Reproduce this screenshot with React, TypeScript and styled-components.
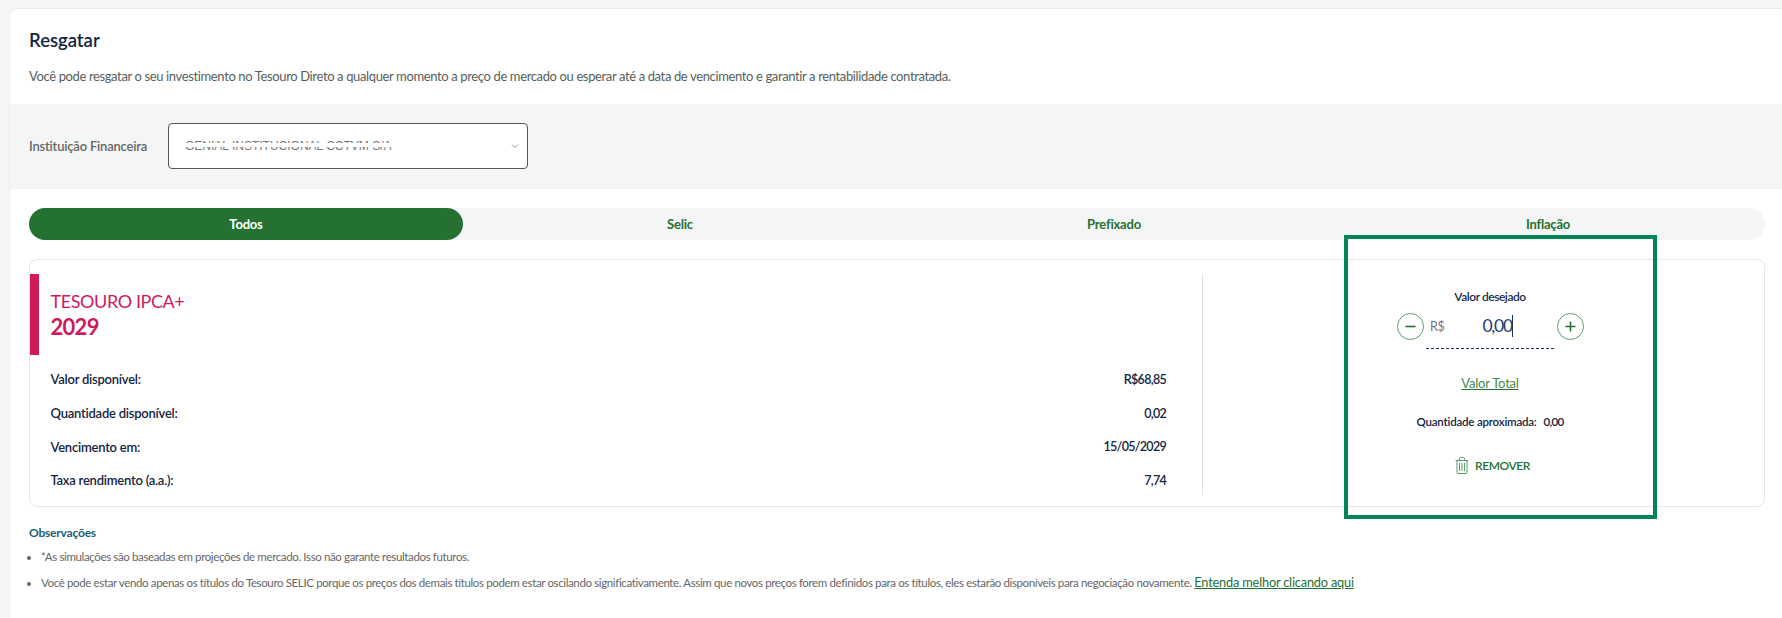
import React from "react";
import styled, { createGlobalStyle } from "styled-components";

const GlobalStyle = createGlobalStyle`
  html, body {
    margin: 0;
    padding: 0;
    background: #f4f6f5;
    font-family: "Lato", "Noto Sans", sans-serif;
    color: #1a2b49;
  }
  body {
    width: 1782px;
    height: 618px;
    overflow: hidden;
  }
`;

const Page = styled.div`
  padding: 8px 0 0 9px;
`;

const Card = styled.div`
  position: relative;
  height: 610px;
  background: #fff;
  border: 1px solid #e9ecea;
  border-right: 0;
  border-bottom: 0;
  border-radius: 8px 0 0 0;
  box-sizing: border-box;
`;

const Header = styled.div`
  padding: 20px 19px 0;
  height: 95px;
  box-sizing: border-box;
`;

const Title = styled.h1`
  margin: 0;
  font-size: 18.5px;
  line-height: 22px;
  font-weight: 600;
  color: #14253f;
`;

const Description = styled.p`
  margin: 16px 0 0;
  font-size: 13px;
  line-height: 18px;
  letter-spacing: -0.37px;
  color: #555f5b;
`;

const Band = styled.div`
  display: flex;
  align-items: center;
  box-sizing: border-box;
  height: 85px;
  padding: 0 19px 1px;
  background: #f4f6f5;
`;

const BandLabel = styled.span`
  flex: 0 0 139px;
  font-size: 13px;
  font-weight: 600;
  letter-spacing: -0.2px;
  color: #666;
`;

const SelectBox = styled.div`
  display: flex;
  align-items: center;
  justify-content: space-between;
  box-sizing: border-box;
  width: 360px;
  height: 46px;
  padding: 0 8px 0 16px;
  background: #fff;
  border: 1px solid #555;
  border-radius: 4px;
`;

/* the institution name is half wiped out in the picture */
const WipedName = styled.span`
  position: relative;
  font-family: "Liberation Sans", sans-serif;
  font-size: 12px;
  line-height: 14px;
  color: #777;

  &::after {
    content: "";
    position: absolute;
    left: 0;
    right: 0;
    top: 4px;
    height: 4px;
    background: #fff;
  }
`;

const Tabs = styled.div`
  display: grid;
  grid-template-columns: repeat(4, 1fr);
  width: 1736px;
  height: 32px;
  margin: 19px 0 0 19px;
  background: #f4f6f5;
  border-radius: 16px;
`;

const Tab = styled.div<{ $active?: boolean }>`
  display: flex;
  align-items: center;
  justify-content: center;
  border-radius: 16px;
  font-size: 13px;
  font-weight: 700;
  letter-spacing: -0.2px;
  background: ${(p) => (p.$active ? "#247132" : "transparent")};
  color: ${(p) => (p.$active ? "#fff" : "#247132")};
`;

const Product = styled.div`
  display: flex;
  width: 1736px;
  height: 248px;
  margin: 19px 0 0 19px;
  box-sizing: border-box;
  padding: 14px 0 11px;
  border: 1px solid #e4e6e5;
  border-radius: 8px;
`;

const Left = styled.div`
  flex: 0 0 1173px;
  box-sizing: border-box;
  border-right: 1px solid #dfe2e1;
`;

const Heading = styled.div`
  border-left: 9px solid #cf1a5c;
  padding: 14px 0 0 11.5px;
  height: 81px;
  box-sizing: border-box;
  color: #cf1a5c;
`;

const HeadingName = styled.div`
  font-size: 18px;
  line-height: 26px;
  font-weight: 400;
  letter-spacing: -0.4px;
`;

const HeadingYear = styled.div`
  font-size: 22px;
  line-height: 26px;
  font-weight: 700;
  letter-spacing: -0.7px;
`;

const Rows = styled.div`
  display: flex;
  flex-direction: column;
  padding: 7.5px 36px 0 20.5px;
`;

const Row = styled.div`
  display: flex;
  justify-content: space-between;
  align-items: center;
  height: 33.7px;
  font-size: 13px;
  font-weight: 600;
  letter-spacing: -0.23px;
  color: #14253f;
`;

const RowValue = styled.span`
  font-size: 12.5px;
  letter-spacing: -0.7px;
`;

const Right = styled.div`
  flex: 1;
  display: flex;
  flex-direction: column;
  align-items: center;
  padding-left: 13px;
`;

const Wanted = styled.div`
  margin-top: 15px;
  font-size: 12px;
  line-height: 16px;
  font-weight: 600;
  letter-spacing: -0.45px;
  color: #1a2b49;
`;

const Stepper = styled.div`
  display: flex;
  align-items: center;
  gap: 2.5px;
  margin-top: 7.5px;
`;

const RoundButton = styled.button`
  display: flex;
  align-items: center;
  justify-content: center;
  box-sizing: border-box;
  width: 27px;
  height: 27px;
  padding: 0;
  background: #fff;
  border: 1px solid #5d9a6c;
  border-radius: 50%;
  color: #247132;
`;

const AmountField = styled.div`
  display: flex;
  align-items: center;
  justify-content: space-between;
  box-sizing: border-box;
  width: 128px;
  height: 27px;
  padding: 0 41px 0 4px;
`;

const Currency = styled.span`
  font-size: 12.5px;
  letter-spacing: -0.3px;
  color: #6b7280;
`;

const Amount = styled.span`
  font-size: 17.5px;
  line-height: 22px;
  letter-spacing: -1.2px;
  color: #1f3f77;
  border-right: 1px solid #1a2b6b;
`;

const Dashes = styled.div`
  width: 128px;
  margin-top: 8.5px;
  border-top: 1px dashed #1a2b6b;
`;

const TotalLink = styled.a`
  margin-top: 25px;
  font-size: 13px;
  line-height: 18px;
  letter-spacing: -0.2px;
  color: #3f8a55;
  text-decoration: underline;
  text-decoration-color: #247132;
`;

const Quantity = styled.div`
  display: flex;
  gap: 7px;
  margin-top: 22px;
  font-size: 11.5px;
  line-height: 16px;
  font-weight: 600;
  letter-spacing: -0.2px;
  color: #14253f;
`;

const QuantityValue = styled.span`
  letter-spacing: -0.7px;
`;

const Remove = styled.div`
  display: flex;
  align-items: center;
  gap: 6px;
  margin: 27px 0 0 5px;
  font-size: 12px;
  font-weight: 600;
  letter-spacing: -0.4px;
  color: #247132;
`;

const Highlight = styled.div`
  position: absolute;
  left: 1334px;
  top: 226px;
  width: 313px;
  height: 284px;
  box-sizing: border-box;
  border: 4px solid #00855a;
  pointer-events: none;
`;

const Notes = styled.div`
  margin: 18px 0 0 19px;
`;

const NotesTitle = styled.div`
  font-size: 12px;
  line-height: 16px;
  font-weight: 700;
  letter-spacing: -0.2px;
  color: #1b5e74;
`;

const NotesList = styled.ul`
  margin: 8px 0 0;
  padding: 0 0 0 12px;
  font-size: 11.5px;
  line-height: 16px;
  letter-spacing: -0.37px;
  color: #666;
`;

const NotesItem = styled.li`
  margin-bottom: 9px;
`;

const NotesLink = styled.a`
  font-size: 12.8px;
  letter-spacing: -0.2px;
  color: #247132;
  text-decoration: underline;
`;

const rows = [
  ["Valor disponível:", "R$68,85"],
  ["Quantidade disponível:", "0,02"],
  ["Vencimento em:", "15/05/2029"],
  ["Taxa rendimento (a.a.):", "7,74"],
];

const Trash = () => (
  <svg width="14" height="17" viewBox="0 0 14 17" fill="none" stroke="#5d9a6c" strokeWidth="1">
    <path d="M.5 3.5h13M4.5 3.5V1.5a1 1 0 0 1 1-1h3a1 1 0 0 1 1 1v2M2 3.5v12a1 1 0 0 0 1 1h8a1 1 0 0 0 1-1v-12M4.5 6v8M7 6v8M9.5 6v8" />
  </svg>
);

const Chevron = () => (
  <svg width="8" height="6" viewBox="0 0 8 6" fill="none" stroke="#999" strokeWidth="1">
    <path d="M1 1.5l3 3 3-3" />
  </svg>
);

const Minus = () => (
  <svg width="13" height="13" viewBox="0 0 13 13" stroke="#247132" strokeWidth="1.6">
    <path d="M1.5 6.5h10" />
  </svg>
);

const Plus = () => (
  <svg width="13" height="13" viewBox="0 0 13 13" stroke="#247132" strokeWidth="1.6">
    <path d="M1.5 6.5h10M6.5 1.5v10" />
  </svg>
);

export default function App() {
  return (
    <Page>
      <GlobalStyle />
      <Card>
        <Header>
          <Title>Resgatar</Title>
          <Description>
            Você pode resgatar o seu investimento no Tesouro Direto a qualquer momento a preço de mercado ou esperar até a data de vencimento e garantir a rentabilidade contratada.
          </Description>
        </Header>
        <Band>
          <BandLabel>Instituição Financeira</BandLabel>
          <SelectBox>
            <WipedName>GENIAL INSTITUCIONAL CCTVM S/A</WipedName>
            <Chevron />
          </SelectBox>
        </Band>
        <Tabs>
          <Tab $active>Todos</Tab>
          <Tab>Selic</Tab>
          <Tab>Prefixado</Tab>
          <Tab>Inflação</Tab>
        </Tabs>
        <Product>
          <Left>
            <Heading>
              <HeadingName>TESOURO IPCA+</HeadingName>
              <HeadingYear>2029</HeadingYear>
            </Heading>
            <Rows>
              {rows.map(([label, value]) => (
                <Row key={label}>
                  <span>{label}</span>
                  <RowValue>{value}</RowValue>
                </Row>
              ))}
            </Rows>
          </Left>
          <Right>
            <Wanted>Valor desejado</Wanted>
            <Stepper>
              <RoundButton><Minus /></RoundButton>
              <AmountField>
                <Currency>R$</Currency>
                <Amount>0,00</Amount>
              </AmountField>
              <RoundButton><Plus /></RoundButton>
            </Stepper>
            <Dashes />
            <TotalLink>Valor Total</TotalLink>
            <Quantity>
              <span>Quantidade aproximada:</span>
              <QuantityValue>0,00</QuantityValue>
            </Quantity>
            <Remove>
              <Trash />
              REMOVER
            </Remove>
          </Right>
        </Product>
        <Notes>
          <NotesTitle>Observações</NotesTitle>
          <NotesList>
            <NotesItem>*As simulações são baseadas em projeções de mercado. Isso não garante resultados futuros.</NotesItem>
            <NotesItem>
              Você pode estar vendo apenas os títulos do Tesouro SELIC porque os preços dos demais títulos podem estar oscilando significativamente. Assim que novos preços forem definidos para os títulos, eles estarão disponíveis para negociação novamente. <NotesLink>Entenda melhor clicando aqui</NotesLink>
            </NotesItem>
          </NotesList>
        </Notes>
        <Highlight />
      </Card>
    </Page>
  );
}
